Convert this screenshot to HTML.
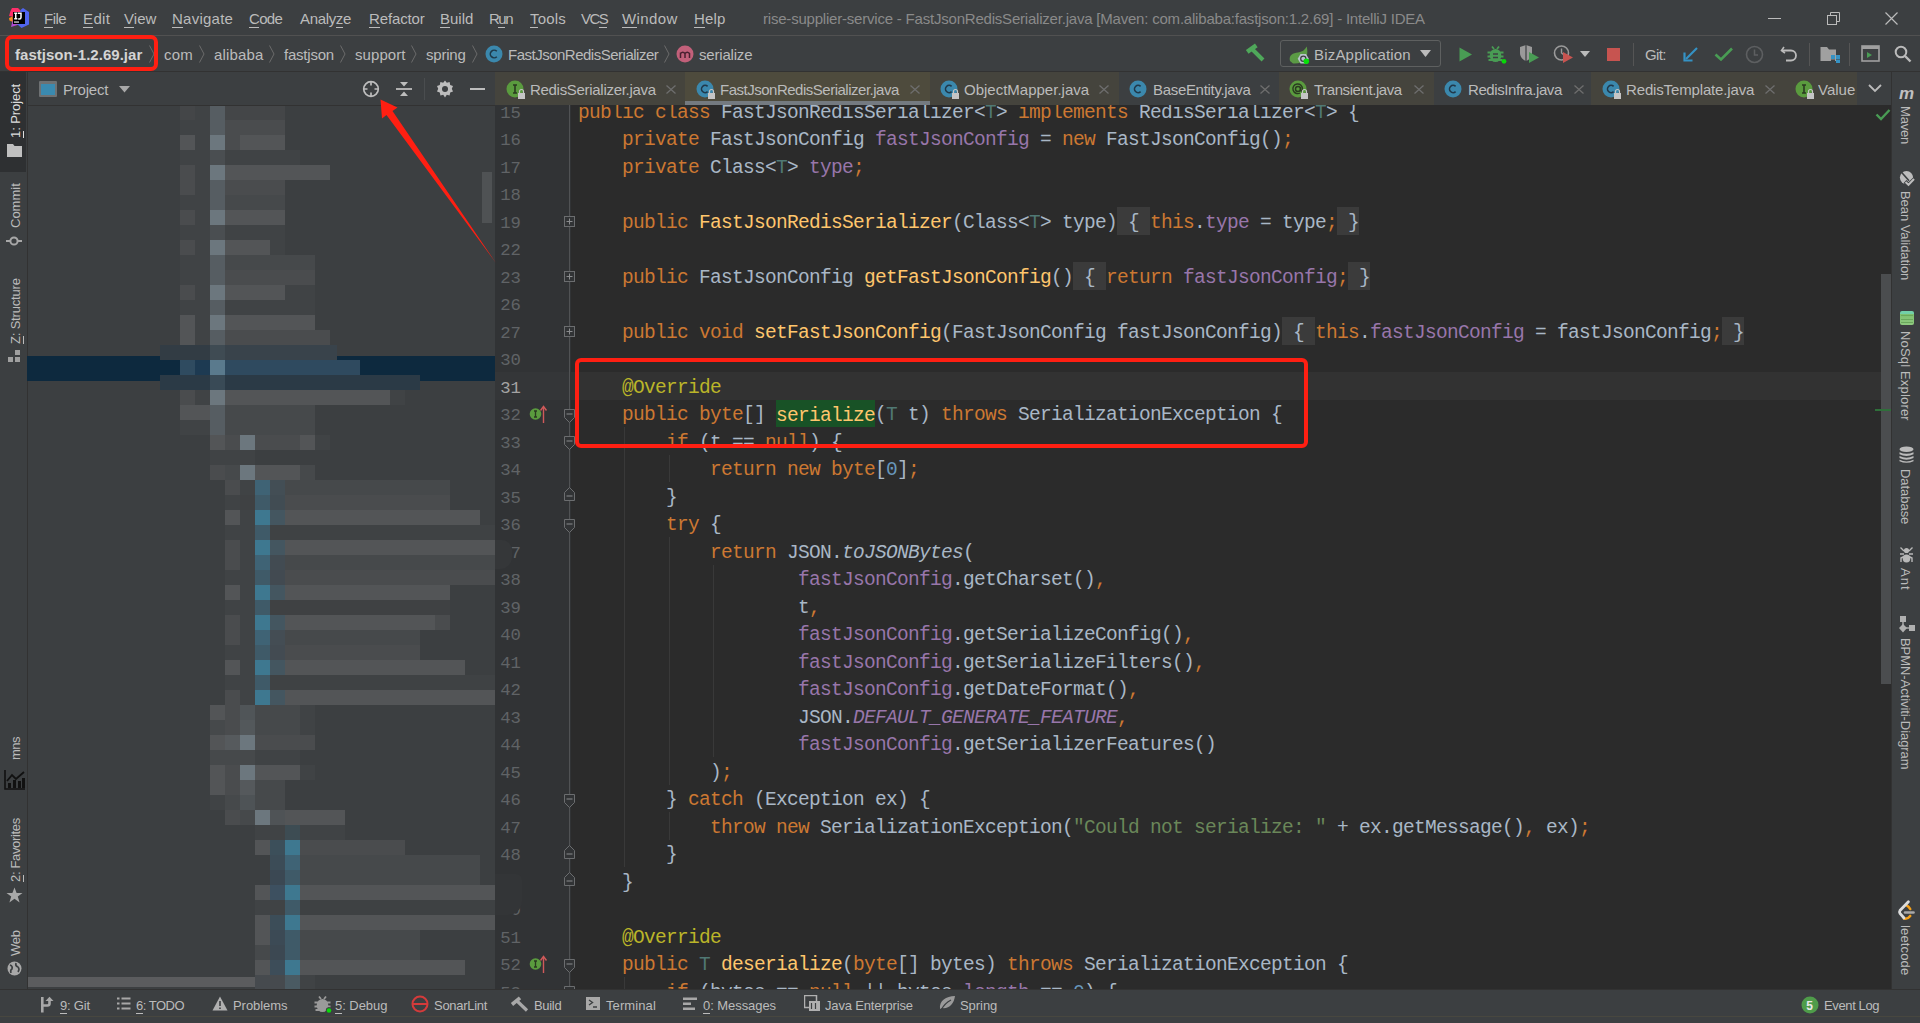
<!DOCTYPE html>
<html><head><meta charset="utf-8">
<style>
*{margin:0;padding:0;box-sizing:border-box}
html,body{width:1920px;height:1023px;overflow:hidden;background:#3c3f41}
body{position:relative;font-family:"Liberation Sans",sans-serif;font-size:15px;color:#bbbbbb}
.a{position:absolute}
.t{position:absolute;white-space:nowrap;line-height:20px}
u{text-decoration:none;border-bottom:1px solid currentColor}
/* menu */
#menu .t{top:9px;color:#bbbbbb}
/* code */
#ed{position:absolute;left:495px;top:105px;width:1397px;height:884px;background:#2b2b2b;overflow:hidden}
#code{position:absolute;left:0;top:-105px}
.cl{position:absolute;left:83px;height:27.5px;line-height:27.5px;white-space:pre;font-family:"Liberation Mono",monospace;font-size:19.5px;letter-spacing:-0.702px;color:#a9b7c6}
.ln{position:absolute;left:0;width:26px;text-align:right;height:27.5px;line-height:27.5px;font-family:"Liberation Mono",monospace;font-size:17.3px;color:#606366}
.ln.cur{color:#a4a3a3}
.k{color:#cc7832}.f{color:#9876aa}.m{color:#ffc66d}.tp{color:#507874}.n{color:#6897bb}.s{color:#6a8759}.an{color:#bbb529}.d{color:#a9b7c6}
.i{font-style:italic}
.fi{color:#9876aa;font-style:italic}
.fold{background:#3b3b3b;color:#a9b7c6;display:inline-block;box-sizing:border-box;height:27.5px;padding-top:2.6px;position:relative;top:-2.6px;vertical-align:top;line-height:27.5px}
.hl{background:#185226;color:#ffc66d;display:inline-block;box-sizing:border-box;height:27px;padding-top:2.6px;position:relative;top:-2.3px;vertical-align:top;line-height:27.5px}
#mos i{position:absolute;height:15px;display:block}
.vt{position:absolute;white-space:nowrap;font-size:13px;line-height:16px;color:#bbbbbb;transform-origin:0 0}
.vtl{transform:rotate(-90deg)}
.vtr{transform:rotate(90deg)}
</style></head><body>

<!-- ============ TITLE / MENU BAR ============ -->
<div id="menu">
  <svg class="a" style="left:0;top:0" width="40" height="35" viewBox="0 0 40 35">
    <polygon points="12,8 18,8 21,11 14,17 9,16 10.5,11" fill="#fe2e6a"/>
    <polygon points="9,18 12.5,16.5 13,22 9.5,20.5" fill="#fb8c1e"/>
    <polygon points="13,19 19,24.5 11,27" fill="#b24ad0"/>
    <polygon points="23,8 29,12 29,24.5 21.5,28 17,24 20.5,10" fill="#5065f0"/>
    <rect x="13" y="12" width="12" height="12" fill="#000"/>
    <path d="M14.2 13.3H17.3M15.75 13.3V18.8M14.2 18.8H17.3M18 13.3H21V17.5Q21 19 19.3 19H18.2" fill="none" stroke="#fff" stroke-width="1.5"/>
    <rect x="14" y="21.3" width="5" height="1.5" fill="#bbb"/>
  </svg>
  <div class="t" style="left:44px;letter-spacing:-0.500px"><u>F</u>ile</div>
  <div class="t" style="left:83px;letter-spacing:0.367px"><u>E</u>dit</div>
  <div class="t" style="left:124px;letter-spacing:0.067px"><u>V</u>iew</div>
  <div class="t" style="left:172px;letter-spacing:0.243px"><u>N</u>avigate</div>
  <div class="t" style="left:249px;letter-spacing:-0.667px"><u>C</u>ode</div>
  <div class="t" style="left:300px;letter-spacing:-0.333px">Analy<u>z</u>e</div>
  <div class="t" style="left:369px;letter-spacing:-0.143px"><u>R</u>efactor</div>
  <div class="t" style="left:440px;letter-spacing:0.000px"><u>B</u>uild</div>
  <div class="t" style="left:489px;letter-spacing:-1.500px">R<u>u</u>n</div>
  <div class="t" style="left:530px;letter-spacing:0.188px"><u>T</u>ools</div>
  <div class="t" style="left:581px;letter-spacing:-1.500px">VC<u>S</u></div>
  <div class="t" style="left:622px;letter-spacing:0.400px"><u>W</u>indow</div>
  <div class="t" style="left:694px;letter-spacing:0.167px"><u>H</u>elp</div>
  <div class="t" style="left:763px;color:#8a8a8a;letter-spacing:-0.207px">rise-supplier-service - FastJsonRedisSerializer.java [Maven: com.alibaba:fastjson:1.2.69] - IntelliJ IDEA</div>
  <div class="a" style="left:1768px;top:18px;width:13px;height:1px;background:#bbbbbb"></div>
  <svg class="a" style="left:1826px;top:11px" width="15" height="15" viewBox="0 0 15 15"><rect x="1.5" y="4.5" width="9" height="9" fill="none" stroke="#bbb"/><path d="M4.5 4.5V1.5H13.5V10.5H10.5" fill="none" stroke="#bbb"/></svg>
  <svg class="a" style="left:1884px;top:11px" width="15" height="15" viewBox="0 0 15 15"><path d="M1.5 1.5L13.5 13.5M13.5 1.5L1.5 13.5" stroke="#bbb" stroke-width="1.2"/></svg>
</div>
<div class="a" style="left:0;top:35px;width:1920px;height:1px;background:#515151"></div>

<!-- ============ NAV BAR ============ -->
<div id="nav">
  <div class="t" style="left:15px;top:45px;font-weight:bold;color:#d4d4d4;letter-spacing:0.028px">fastjson-1.2.69.jar</div>
  <svg class="a" style="left:148px;top:44px" width="8" height="20"><path d="M1.5 1.5L6 10L1.5 18.5" fill="none" stroke="#6b6b6b"/></svg>
  <div class="t" style="left:164px;top:45px;letter-spacing:0.250px">com</div>
  <svg class="a" style="left:198px;top:44px" width="8" height="20"><path d="M1.5 1.5L6 10L1.5 18.5" fill="none" stroke="#6b6b6b"/></svg>
  <div class="t" style="left:214px;top:45px;letter-spacing:0.167px">alibaba</div>
  <svg class="a" style="left:268px;top:44px" width="8" height="20"><path d="M1.5 1.5L6 10L1.5 18.5" fill="none" stroke="#6b6b6b"/></svg>
  <div class="t" style="left:284px;top:45px;letter-spacing:-0.214px">fastjson</div>
  <svg class="a" style="left:339px;top:44px" width="8" height="20"><path d="M1.5 1.5L6 10L1.5 18.5" fill="none" stroke="#6b6b6b"/></svg>
  <div class="t" style="left:355px;top:45px;letter-spacing:0.083px">support</div>
  <svg class="a" style="left:410px;top:44px" width="8" height="20"><path d="M1.5 1.5L6 10L1.5 18.5" fill="none" stroke="#6b6b6b"/></svg>
  <div class="t" style="left:426px;top:45px;letter-spacing:-0.200px">spring</div>
  <svg class="a" style="left:471px;top:44px" width="8" height="20"><path d="M1.5 1.5L6 10L1.5 18.5" fill="none" stroke="#6b6b6b"/></svg>
  <svg class="a" style="left:485px;top:45px" width="18" height="18" viewBox="0 0 18 18"><circle cx="9" cy="9" r="8.5" fill="#3b88ad"/><path d="M11.8 6.3A3.8 3.8 0 1 0 11.8 11.7" fill="none" stroke="#1e3a4a" stroke-width="1.6"/></svg>
  <div class="t" style="left:508px;top:45px;letter-spacing:-0.500px">FastJsonRedisSerializer</div>
  <svg class="a" style="left:663px;top:44px" width="8" height="20"><path d="M1.5 1.5L6 10L1.5 18.5" fill="none" stroke="#6b6b6b"/></svg>
  <svg class="a" style="left:676px;top:45px" width="18" height="18" viewBox="0 0 18 18"><circle cx="9" cy="9" r="8.5" fill="#c2607a"/><path d="M4.5 13V7.5M4.5 8.5Q6.8 5.8 9 8.5V13M9 8.5Q11.2 5.8 13.5 8.5V13" fill="none" stroke="#4a2030" stroke-width="1.5"/></svg>
  <div class="t" style="left:699px;top:45px;letter-spacing:-0.188px">serialize</div>

  <svg class="a" style="left:1240px;top:38px" width="30" height="30"><path d="M7.2 13.8L16.3 7.3" stroke="#4fa85a" stroke-width="4.5"/><path d="M11.5 10.5L23 22" stroke="#4fa85a" stroke-width="4"/></svg>
  <div class="a" style="left:1280px;top:40px;width:161px;height:27px;border:1px solid #5e6060;border-radius:3px;background:#3c3f41"></div>
  <svg class="a" style="left:1285px;top:42px" width="30" height="26" viewBox="0 0 30 26"><path d="M5 19C3.5 13 8 11 13 10.5C17 10 20 8 21.7 4.5C22.5 8 22.5 11 22 13L17 20Q12 22 8 21.5Z" fill="#5b9a45"/><polygon points="12.7,16.8 15.5,12 21,12 23.8,16.8 21,21.6 15.5,21.6" fill="#b9c4cc"/><circle cx="18.3" cy="16.8" r="2.6" fill="none" stroke="#3a3d3f" stroke-width="1.2"/><circle cx="21.3" cy="19.3" r="2.8" fill="#08e008"/></svg>
  <div class="t" style="left:1314px;top:45px;letter-spacing:0.192px">BizApplication</div>
  <svg class="a" style="left:1420px;top:50px" width="12" height="8"><path d="M0 0H11L5.5 7Z" fill="#bbbbbb"/></svg>
  <svg class="a" style="left:1459px;top:47px" width="14" height="15"><path d="M0.5 0.5L13 7.5L0.5 14.5Z" fill="#499c54"/></svg>
  <svg class="a" style="left:1486px;top:44px" width="22" height="20" viewBox="0 0 22 20"><path d="M6 2.5L8 5M13 2.5L11 5" stroke="#499c54" stroke-width="1.8"/><ellipse cx="9.5" cy="11.5" rx="5.8" ry="6.6" fill="#499c54"/><path d="M1.5 8.5H17.5M1.5 12.5H17.5M2.5 16H16.5" stroke="#499c54" stroke-width="2"/><path d="M7 10H12M7 13.5H12" stroke="#3c3f41" stroke-width="1.5"/><circle cx="18" cy="17.3" r="2.4" fill="#08d808"/></svg>
  <svg class="a" style="left:1519px;top:44px" width="22" height="20" viewBox="0 0 22 20"><path d="M1 3L7 1L13 3V9C13 13 10 16 7 17C4 16 1 13 1 9Z" fill="#9a9a9a"/><path d="M7 1V17" stroke="#3c3f41" stroke-width="1.2"/><path d="M10 8L20 13.5L10 19Z" fill="#499c54"/></svg>
  <svg class="a" style="left:1553px;top:44px" width="22" height="20" viewBox="0 0 22 20"><circle cx="8.5" cy="9" r="7" fill="none" stroke="#9a9a9a" stroke-width="1.6"/><path d="M8.5 4.5V9L11 11" fill="none" stroke="#9a9a9a" stroke-width="1.4"/><path d="M10 8L20 13.5L10 19Z" fill="#c75450"/></svg>
  <svg class="a" style="left:1580px;top:51px" width="11" height="7"><path d="M0 0H10L5 6Z" fill="#bbbbbb"/></svg>
  <div class="a" style="left:1607px;top:47.5px;width:12.5px;height:13px;background:#c75450"></div>
  <div class="a" style="left:1633px;top:43px;width:1px;height:23px;background:#555555"></div>
  <div class="t" style="left:1645px;top:45px;letter-spacing:-0.667px">Git:</div>
  <svg class="a" style="left:1683px;top:46px" width="16" height="16" viewBox="0 0 16 16"><path d="M14 2L3 13" stroke="#3592c4" stroke-width="2.2"/><path d="M1.5 6.5V14.5H9.5" fill="none" stroke="#3592c4" stroke-width="2.2"/></svg>
  <svg class="a" style="left:1714px;top:46px" width="20" height="16" viewBox="0 0 20 16"><path d="M1.5 8.5L7 13.5L18 2.5" fill="none" stroke="#499c54" stroke-width="2.6"/></svg>
  <svg class="a" style="left:1745px;top:45px" width="20" height="19" viewBox="0 0 20 19"><circle cx="9.5" cy="9.5" r="8" fill="none" stroke="#5d5f61" stroke-width="1.6"/><path d="M9.5 4.5V10H13" fill="none" stroke="#5d5f61" stroke-width="1.5"/></svg>
  <svg class="a" style="left:1780px;top:45px" width="18" height="18" viewBox="0 0 18 18"><path d="M4 2L1.5 5.5L5 8" fill="none" stroke="#bbbbbb" stroke-width="1.6"/><path d="M2 5.5H11A5 5 0 0 1 11 15.5H6" fill="none" stroke="#bbbbbb" stroke-width="1.8"/></svg>
  <div class="a" style="left:1809px;top:43px;width:1px;height:23px;background:#555555"></div>
  <svg class="a" style="left:1820px;top:46px" width="20" height="17" viewBox="0 0 20 17"><path d="M0.5 1H7L9 3.5H16V15H0.5Z" fill="#a0a0a0"/><rect x="11" y="9" width="4" height="4" fill="#3592c4"/><rect x="16" y="9" width="4" height="4" fill="#3592c4"/><rect x="16" y="13.5" width="4" height="3.5" fill="#3592c4"/><rect x="11" y="13.5" width="4" height="3.5" fill="#3c3f41"/></svg>
  <div class="a" style="left:1849px;top:43px;width:1px;height:23px;background:#555555"></div>
  <svg class="a" style="left:1861px;top:45px" width="19" height="17" viewBox="0 0 19 17"><rect x="1" y="1" width="17" height="15" fill="none" stroke="#a0a0a0" stroke-width="1.6"/><rect x="1" y="1" width="17" height="3" fill="#a0a0a0"/><path d="M6 7L11 10L6 13Z" fill="#499c54"/></svg>
  <svg class="a" style="left:1894px;top:45px" width="18" height="18" viewBox="0 0 18 18"><circle cx="7" cy="7" r="5.3" fill="none" stroke="#bbbbbb" stroke-width="2"/><path d="M11 11L16.5 16.5" stroke="#bbbbbb" stroke-width="2.4"/></svg>
</div>
<div class="a" style="left:0;top:71px;width:1920px;height:1px;background:#323232"></div>

<!-- ============ LEFT STRIPE ============ -->
<div class="a" style="left:0;top:72px;width:27px;height:917px;background:#3c3f41"></div>
<div class="a" style="left:0;top:72px;width:26px;height:100px;background:#2e3032"></div>
<div class="a" style="left:27px;top:72px;width:1px;height:917px;background:#323232"></div>
<div class="vt vtl" style="left:8px;top:137.8px;color:#dddddd;letter-spacing:-0.078px"><u>1</u>: Project</div>
<svg class="a" style="left:7px;top:144px" width="15" height="13"><path d="M0 0H6L7.5 2H15V13H0Z" fill="#c0c0c0"/></svg>
<div class="vt vtl" style="left:8px;top:228px;letter-spacing:0.000px">Commit</div>
<svg class="a" style="left:6px;top:235px" width="16" height="12"><circle cx="8" cy="6" r="3.6" fill="none" stroke="#a8a8a8" stroke-width="2"/><path d="M0 6H4M12 6H16" stroke="#a8a8a8" stroke-width="2"/></svg>
<div class="vt vtl" style="left:8px;top:344px;letter-spacing:-0.182px"><u>Z</u>: Structure</div>
<svg class="a" style="left:7px;top:350px" width="14" height="14"><rect x="8" y="0" width="5" height="5" fill="#a0a0a0"/><rect x="1" y="7" width="5" height="5" fill="#a0a0a0"/><rect x="8" y="7" width="5" height="5" fill="#a0a0a0"/></svg>
<div class="vt vtl" style="left:8px;top:760px;letter-spacing:-0.500px">mns</div>
<svg class="a" style="left:4px;top:769px" width="22" height="21"><path d="M1 1V20H21" fill="none" stroke="#111" stroke-width="1.6"/><path d="M3 12L8 6L12 10L20 3" fill="none" stroke="#111" stroke-width="1.8"/><rect x="4" y="14" width="3" height="5" fill="#111"/><rect x="9" y="11" width="3" height="8" fill="#111"/><rect x="14" y="12" width="3" height="7" fill="#111"/><rect x="18" y="9" width="3" height="10" fill="#111"/></svg>
<div class="vt vtl" style="left:8px;top:882px;letter-spacing:-0.336px"><u>2</u>: Favorites</div>
<svg class="a" style="left:6px;top:887px" width="17" height="17" viewBox="0 0 17 17"><path d="M8.5 0.5L10.6 6H16.5L11.8 9.5L13.6 15.5L8.5 11.8L3.4 15.5L5.2 9.5L0.5 6H6.4Z" fill="#a8a8a8"/></svg>
<div class="vt vtl" style="left:8px;top:955.5px;letter-spacing:-0.250px">Web</div>
<svg class="a" style="left:7px;top:961px" width="15" height="15" viewBox="0 0 15 15"><circle cx="7.5" cy="7.5" r="7" fill="#a8a8a8"/><path d="M3 4Q6 5 5 8Q3 9 4 12M9 2Q8 5 11 6Q13 8 11 11" fill="none" stroke="#3c3f41" stroke-width="1.6"/></svg>

<!-- ============ PROJECT PANEL ============ -->
<div class="a" style="left:28px;top:72px;width:467px;height:917px;background:#3c3f41"></div>
<div class="a" style="left:39px;top:81px;width:18px;height:16px;background:#6e7173;border-radius:1px"></div>
<div class="a" style="left:41px;top:84px;width:14px;height:11px;background:#3a8ab0"></div>
<div class="t" style="left:63px;top:80px;color:#bbbbbb;letter-spacing:-0.200px">Project</div>
<svg class="a" style="left:119px;top:86px" width="12" height="8"><path d="M0 0H11L5.5 6.5Z" fill="#a8a8a8"/></svg>
<svg class="a" style="left:362px;top:80px" width="18" height="18" viewBox="0 0 18 18"><circle cx="9" cy="9" r="7.3" fill="none" stroke="#bdbdbd" stroke-width="1.7"/><path d="M9 1V5.5M9 12.5V17M1 9H5.5M12.5 9H17" stroke="#bdbdbd" stroke-width="1.7"/></svg>
<svg class="a" style="left:395px;top:80px" width="18" height="18" viewBox="0 0 18 18"><path d="M1 9H17" stroke="#bdbdbd" stroke-width="1.8"/><path d="M5 2H13L9 6.5Z M5 16H13L9 11.5Z" fill="#bdbdbd"/></svg>
<div class="a" style="left:424px;top:78px;width:1px;height:22px;background:#4a4d4f"></div>
<svg class="a" style="left:436px;top:80px" width="18" height="18" viewBox="0 0 18 18"><path d="M9 0.5L10.8 2.8L13.6 2.1L14.2 5L17 6L15.8 8.8L17 11.6L14.2 12.6L13.6 15.5L10.8 14.8L9 17.5L7.2 14.8L4.4 15.5L3.8 12.6L1 11.6L2.2 8.8L1 6L3.8 5L4.4 2.1L7.2 2.8Z" fill="#bdbdbd"/><circle cx="9" cy="9" r="3" fill="#3c3f41"/></svg>
<div class="a" style="left:470px;top:88px;width:15px;height:2px;background:#bdbdbd"></div>
<div class="a" style="left:482px;top:172px;width:10px;height:51px;background:#4f5254"></div>
<div class="a" style="left:28px;top:977px;width:228px;height:10px;background:#5b5c5e"></div>

<div class="a" style="left:27px;top:356px;width:468px;height:25px;background:#0d293e"></div>
<div id="mos"><i style="left:180px;top:105px;width:15px;background:#444648"></i>
<i style="left:195px;top:105px;width:15px;background:#404345"></i>
<i style="left:210px;top:105px;width:15px;background:#565d62"></i>
<i style="left:225px;top:105px;width:60px;background:#444648"></i>
<i style="left:180px;top:120px;width:30px;background:#404345"></i>
<i style="left:210px;top:120px;width:15px;background:#565d62"></i>
<i style="left:225px;top:120px;width:60px;background:#4a4c4e"></i>
<i style="left:180px;top:135px;width:15px;background:#535557"></i>
<i style="left:195px;top:135px;width:15px;background:#404345"></i>
<i style="left:210px;top:135px;width:15px;background:#6c777e"></i>
<i style="left:225px;top:135px;width:15px;background:#4a4c4e"></i>
<i style="left:240px;top:135px;width:45px;background:#535557"></i>
<i style="left:180px;top:150px;width:30px;background:#404345"></i>
<i style="left:210px;top:150px;width:15px;background:#4a4e51"></i>
<i style="left:225px;top:150px;width:75px;background:#404345"></i>
<i style="left:180px;top:165px;width:15px;background:#4a4c4e"></i>
<i style="left:195px;top:165px;width:15px;background:#404345"></i>
<i style="left:210px;top:165px;width:15px;background:#6c777e"></i>
<i style="left:225px;top:165px;width:105px;background:#535557"></i>
<i style="left:180px;top:180px;width:15px;background:#4a4c4e"></i>
<i style="left:195px;top:180px;width:15px;background:#404345"></i>
<i style="left:210px;top:180px;width:15px;background:#565d62"></i>
<i style="left:225px;top:180px;width:60px;background:#4a4c4e"></i>
<i style="left:180px;top:195px;width:30px;background:#404345"></i>
<i style="left:210px;top:195px;width:15px;background:#565d62"></i>
<i style="left:225px;top:195px;width:60px;background:#46494b"></i>
<i style="left:180px;top:210px;width:15px;background:#4a4c4e"></i>
<i style="left:195px;top:210px;width:15px;background:#404345"></i>
<i style="left:210px;top:210px;width:15px;background:#6c777e"></i>
<i style="left:225px;top:210px;width:60px;background:#535557"></i>
<i style="left:180px;top:225px;width:30px;background:#404345"></i>
<i style="left:210px;top:225px;width:15px;background:#4a4e51"></i>
<i style="left:225px;top:225px;width:60px;background:#404345"></i>
<i style="left:180px;top:240px;width:15px;background:#4a4c4e"></i>
<i style="left:195px;top:240px;width:15px;background:#404345"></i>
<i style="left:210px;top:240px;width:15px;background:#6c777e"></i>
<i style="left:225px;top:240px;width:45px;background:#535557"></i>
<i style="left:270px;top:240px;width:15px;background:#404345"></i>
<i style="left:180px;top:255px;width:30px;background:#404345"></i>
<i style="left:210px;top:255px;width:15px;background:#565d62"></i>
<i style="left:225px;top:255px;width:90px;background:#46494b"></i>
<i style="left:180px;top:270px;width:30px;background:#404345"></i>
<i style="left:210px;top:270px;width:15px;background:#565d62"></i>
<i style="left:225px;top:270px;width:90px;background:#4a4c4e"></i>
<i style="left:180px;top:285px;width:15px;background:#4a4c4e"></i>
<i style="left:195px;top:285px;width:15px;background:#404345"></i>
<i style="left:210px;top:285px;width:15px;background:#6c777e"></i>
<i style="left:225px;top:285px;width:60px;background:#535557"></i>
<i style="left:285px;top:285px;width:30px;background:#404345"></i>
<i style="left:180px;top:300px;width:30px;background:#404345"></i>
<i style="left:210px;top:300px;width:15px;background:#565d62"></i>
<i style="left:225px;top:300px;width:90px;background:#404345"></i>
<i style="left:180px;top:315px;width:15px;background:#535557"></i>
<i style="left:195px;top:315px;width:15px;background:#404345"></i>
<i style="left:210px;top:315px;width:15px;background:#6c777e"></i>
<i style="left:225px;top:315px;width:90px;background:#535557"></i>
<i style="left:180px;top:330px;width:15px;background:#535557"></i>
<i style="left:195px;top:330px;width:15px;background:#404345"></i>
<i style="left:210px;top:330px;width:15px;background:#565d62"></i>
<i style="left:225px;top:330px;width:105px;background:#4a4c4e"></i>
<i style="left:160px;top:345px;width:50px;background:#323c44"></i>
<i style="left:210px;top:345px;width:15px;background:#3f4b53"></i>
<i style="left:225px;top:345px;width:112px;background:#39434b"></i>
<i style="left:180px;top:360px;width:15px;background:#2f4b60"></i>
<i style="left:195px;top:360px;width:15px;background:#1d3a52"></i>
<i style="left:210px;top:360px;width:15px;background:#5a7a8d"></i>
<i style="left:225px;top:360px;width:135px;background:#2f4a5f"></i>
<i style="left:160px;top:375px;width:50px;background:#2b3a46"></i>
<i style="left:210px;top:375px;width:15px;background:#394a56"></i>
<i style="left:225px;top:375px;width:195px;background:#2b3a46"></i>
<i style="left:180px;top:390px;width:15px;background:#4a4c4e"></i>
<i style="left:195px;top:390px;width:15px;background:#404345"></i>
<i style="left:210px;top:390px;width:15px;background:#6c777e"></i>
<i style="left:225px;top:390px;width:165px;background:#535557"></i>
<i style="left:390px;top:390px;width:15px;background:#404345"></i>
<i style="left:180px;top:405px;width:30px;background:#535557"></i>
<i style="left:210px;top:405px;width:15px;background:#565d62"></i>
<i style="left:225px;top:405px;width:90px;background:#46494b"></i>
<i style="left:180px;top:420px;width:30px;background:#404345"></i>
<i style="left:210px;top:420px;width:15px;background:#565d62"></i>
<i style="left:225px;top:420px;width:90px;background:#46494b"></i>
<i style="left:210px;top:435px;width:15px;background:#535557"></i>
<i style="left:225px;top:435px;width:15px;background:#4a4c4e"></i>
<i style="left:240px;top:435px;width:15px;background:#6c777e"></i>
<i style="left:255px;top:435px;width:45px;background:#4a4c4e"></i>
<i style="left:300px;top:435px;width:15px;background:#535557"></i>
<i style="left:315px;top:435px;width:15px;background:#404345"></i>
<i style="left:210px;top:450px;width:45px;background:#404345"></i>
<i style="left:210px;top:465px;width:15px;background:#4a4c4e"></i>
<i style="left:225px;top:465px;width:15px;background:#46494b"></i>
<i style="left:240px;top:465px;width:15px;background:#6c777e"></i>
<i style="left:255px;top:465px;width:45px;background:#535557"></i>
<i style="left:300px;top:465px;width:15px;background:#46494b"></i>
<i style="left:225px;top:480px;width:15px;background:#4a4c4e"></i>
<i style="left:240px;top:480px;width:15px;background:#404345"></i>
<i style="left:255px;top:480px;width:15px;background:#3f6375"></i>
<i style="left:270px;top:480px;width:15px;background:#434e55"></i>
<i style="left:285px;top:480px;width:165px;background:#46494b"></i>
<i style="left:225px;top:495px;width:15px;background:#404345"></i>
<i style="left:240px;top:495px;width:15px;background:#3f4143"></i>
<i style="left:255px;top:495px;width:15px;background:#3f5a68"></i>
<i style="left:270px;top:495px;width:15px;background:#414c53"></i>
<i style="left:285px;top:495px;width:165px;background:#4a4c4e"></i>
<i style="left:225px;top:510px;width:15px;background:#535557"></i>
<i style="left:240px;top:510px;width:15px;background:#404345"></i>
<i style="left:255px;top:510px;width:15px;background:#3e7890"></i>
<i style="left:270px;top:510px;width:15px;background:#445660"></i>
<i style="left:285px;top:510px;width:195px;background:#535557"></i>
<i style="left:225px;top:525px;width:30px;background:#404345"></i>
<i style="left:255px;top:525px;width:15px;background:#3f5a68"></i>
<i style="left:270px;top:525px;width:225px;background:#3f4244"></i>
<i style="left:225px;top:540px;width:15px;background:#4a4c4e"></i>
<i style="left:240px;top:540px;width:15px;background:#404345"></i>
<i style="left:255px;top:540px;width:15px;background:#3e7890"></i>
<i style="left:270px;top:540px;width:15px;background:#445660"></i>
<i style="left:285px;top:540px;width:210px;background:#535557"></i>
<i style="left:225px;top:555px;width:15px;background:#4a4c4e"></i>
<i style="left:240px;top:555px;width:15px;background:#404345"></i>
<i style="left:255px;top:555px;width:15px;background:#3f6375"></i>
<i style="left:270px;top:555px;width:15px;background:#424b52"></i>
<i style="left:285px;top:555px;width:210px;background:#46494b"></i>
<i style="left:225px;top:570px;width:15px;background:#404345"></i>
<i style="left:240px;top:570px;width:15px;background:#404345"></i>
<i style="left:255px;top:570px;width:15px;background:#3f5a68"></i>
<i style="left:270px;top:570px;width:15px;background:#424a51"></i>
<i style="left:285px;top:570px;width:210px;background:#4a4c4e"></i>
<i style="left:225px;top:585px;width:15px;background:#535557"></i>
<i style="left:240px;top:585px;width:15px;background:#404345"></i>
<i style="left:255px;top:585px;width:15px;background:#3e7890"></i>
<i style="left:270px;top:585px;width:15px;background:#445660"></i>
<i style="left:285px;top:585px;width:165px;background:#535557"></i>
<i style="left:225px;top:600px;width:30px;background:#404345"></i>
<i style="left:255px;top:600px;width:15px;background:#3f5a68"></i>
<i style="left:270px;top:600px;width:180px;background:#3f4143"></i>
<i style="left:225px;top:615px;width:15px;background:#4a4c4e"></i>
<i style="left:240px;top:615px;width:15px;background:#404345"></i>
<i style="left:255px;top:615px;width:15px;background:#3e7890"></i>
<i style="left:270px;top:615px;width:15px;background:#445660"></i>
<i style="left:285px;top:615px;width:150px;background:#535557"></i>
<i style="left:435px;top:615px;width:15px;background:#4a4c4e"></i>
<i style="left:225px;top:630px;width:15px;background:#4a4c4e"></i>
<i style="left:240px;top:630px;width:15px;background:#404345"></i>
<i style="left:255px;top:630px;width:15px;background:#3f6375"></i>
<i style="left:270px;top:630px;width:15px;background:#444d54"></i>
<i style="left:285px;top:630px;width:135px;background:#46494b"></i>
<i style="left:225px;top:645px;width:15px;background:#404345"></i>
<i style="left:240px;top:645px;width:15px;background:#404345"></i>
<i style="left:255px;top:645px;width:15px;background:#3f5a68"></i>
<i style="left:270px;top:645px;width:15px;background:#434b52"></i>
<i style="left:285px;top:645px;width:135px;background:#4a4c4e"></i>
<i style="left:225px;top:660px;width:15px;background:#535557"></i>
<i style="left:240px;top:660px;width:15px;background:#404345"></i>
<i style="left:255px;top:660px;width:15px;background:#3e7890"></i>
<i style="left:270px;top:660px;width:15px;background:#445660"></i>
<i style="left:285px;top:660px;width:180px;background:#535557"></i>
<i style="left:225px;top:675px;width:30px;background:#404345"></i>
<i style="left:255px;top:675px;width:15px;background:#3f5a68"></i>
<i style="left:270px;top:675px;width:225px;background:#3f4244"></i>
<i style="left:225px;top:690px;width:15px;background:#4a4c4e"></i>
<i style="left:240px;top:690px;width:15px;background:#404345"></i>
<i style="left:255px;top:690px;width:15px;background:#3e7890"></i>
<i style="left:270px;top:690px;width:15px;background:#445660"></i>
<i style="left:285px;top:690px;width:210px;background:#535557"></i>
<i style="left:210px;top:705px;width:15px;background:#535557"></i>
<i style="left:225px;top:705px;width:15px;background:#4a4c4e"></i>
<i style="left:240px;top:705px;width:15px;background:#505558"></i>
<i style="left:255px;top:705px;width:45px;background:#46494b"></i>
<i style="left:300px;top:705px;width:15px;background:#404345"></i>
<i style="left:210px;top:720px;width:15px;background:#46494b"></i>
<i style="left:225px;top:720px;width:15px;background:#4a4c4e"></i>
<i style="left:240px;top:720px;width:15px;background:#53585b"></i>
<i style="left:255px;top:720px;width:45px;background:#46494b"></i>
<i style="left:300px;top:720px;width:15px;background:#404345"></i>
<i style="left:210px;top:735px;width:15px;background:#535557"></i>
<i style="left:225px;top:735px;width:15px;background:#565a5d"></i>
<i style="left:240px;top:735px;width:15px;background:#6c777e"></i>
<i style="left:255px;top:735px;width:60px;background:#4a4c4e"></i>
<i style="left:210px;top:750px;width:45px;background:#46494b"></i>
<i style="left:255px;top:750px;width:45px;background:#404345"></i>
<i style="left:210px;top:765px;width:15px;background:#535557"></i>
<i style="left:225px;top:765px;width:15px;background:#4a4c4e"></i>
<i style="left:240px;top:765px;width:15px;background:#6c777e"></i>
<i style="left:255px;top:765px;width:45px;background:#535557"></i>
<i style="left:300px;top:765px;width:15px;background:#404345"></i>
<i style="left:210px;top:780px;width:15px;background:#535557"></i>
<i style="left:225px;top:780px;width:15px;background:#4a4c4e"></i>
<i style="left:240px;top:780px;width:15px;background:#55595c"></i>
<i style="left:255px;top:780px;width:30px;background:#46494b"></i>
<i style="left:210px;top:795px;width:15px;background:#404345"></i>
<i style="left:225px;top:795px;width:15px;background:#46494b"></i>
<i style="left:240px;top:795px;width:15px;background:#4e5356"></i>
<i style="left:255px;top:795px;width:30px;background:#46494b"></i>
<i style="left:225px;top:810px;width:15px;background:#4a4c4e"></i>
<i style="left:240px;top:810px;width:15px;background:#46494b"></i>
<i style="left:255px;top:810px;width:15px;background:#6c777e"></i>
<i style="left:270px;top:810px;width:15px;background:#4f5356"></i>
<i style="left:285px;top:810px;width:60px;background:#535557"></i>
<i style="left:255px;top:825px;width:30px;background:#404345"></i>
<i style="left:285px;top:825px;width:15px;background:#3d4c53"></i>
<i style="left:300px;top:825px;width:45px;background:#404345"></i>
<i style="left:255px;top:840px;width:15px;background:#535557"></i>
<i style="left:270px;top:840px;width:15px;background:#3c4f5a"></i>
<i style="left:285px;top:840px;width:15px;background:#3e7890"></i>
<i style="left:300px;top:840px;width:105px;background:#4a4c4e"></i>
<i style="left:270px;top:855px;width:15px;background:#3c4c57"></i>
<i style="left:285px;top:855px;width:15px;background:#3f6375"></i>
<i style="left:300px;top:855px;width:180px;background:#46494b"></i>
<i style="left:270px;top:870px;width:15px;background:#3b4853"></i>
<i style="left:285px;top:870px;width:15px;background:#3f5a68"></i>
<i style="left:300px;top:870px;width:180px;background:#46494b"></i>
<i style="left:255px;top:885px;width:15px;background:#535557"></i>
<i style="left:270px;top:885px;width:15px;background:#3d5060"></i>
<i style="left:285px;top:885px;width:15px;background:#3e7890"></i>
<i style="left:300px;top:885px;width:195px;background:#535557"></i>
<i style="left:255px;top:900px;width:30px;background:#404345"></i>
<i style="left:285px;top:900px;width:15px;background:#3f5a68"></i>
<i style="left:300px;top:900px;width:195px;background:#3e4143"></i>
<i style="left:255px;top:915px;width:15px;background:#535557"></i>
<i style="left:270px;top:915px;width:15px;background:#3c4d58"></i>
<i style="left:285px;top:915px;width:15px;background:#3e7890"></i>
<i style="left:300px;top:915px;width:195px;background:#535557"></i>
<i style="left:255px;top:930px;width:15px;background:#535557"></i>
<i style="left:270px;top:930px;width:15px;background:#3c4a55"></i>
<i style="left:285px;top:930px;width:15px;background:#3f5a68"></i>
<i style="left:300px;top:930px;width:120px;background:#46494b"></i>
<i style="left:255px;top:945px;width:15px;background:#46494b"></i>
<i style="left:270px;top:945px;width:15px;background:#3c4852"></i>
<i style="left:285px;top:945px;width:15px;background:#3f5a68"></i>
<i style="left:300px;top:945px;width:120px;background:#46494b"></i>
<i style="left:255px;top:960px;width:15px;background:#535557"></i>
<i style="left:270px;top:960px;width:15px;background:#3d4d59"></i>
<i style="left:285px;top:960px;width:15px;background:#3e7890"></i>
<i style="left:300px;top:960px;width:165px;background:#535557"></i>
<i style="left:255px;top:975px;width:30px;background:#464a4e"></i>
<i style="left:285px;top:975px;width:15px;background:#4a5a62"></i>
<i style="left:300px;top:975px;width:15px;background:#404345"></i></div>
<div class="a" style="left:28px;top:105px;width:467px;height:1px;background:#323232"></div>
<div class="a" style="left:495px;top:540px;width:17px;height:29px;background:#353739;border-radius:0 10px 12px 0;z-index:2"></div>
<div class="a" style="left:495px;top:874px;width:27px;height:41px;background:#333537;border-radius:0 6px 14px 0;z-index:2"></div>

<!-- ============ EDITOR ============ -->
<div class="a" style="left:495px;top:72px;width:1397px;height:33px;background:#3c3f41"></div>
<div class="a" style="left:495px;top:72px;width:190px;height:33px;background:#45443d"></div>
<svg class="a" style="left:506px;top:80px" width="20" height="20" viewBox="0 0 20 20"><circle cx="9" cy="9" r="8.5" fill="#5a9b3e"/><path d="M7 5H11M9 5V13M7 13H11" stroke="#2a3a20" stroke-width="1.6"/><rect x="12" y="13" width="7" height="6" fill="#c5c5c5"/><path d="M13.5 13V11.5A2 2 0 0 1 17.5 11.5V13" fill="none" stroke="#c5c5c5" stroke-width="1.2"/></svg>
<div class="t" style="left:530px;top:80px;letter-spacing:-0.300px">RedisSerializer.java</div>
<svg class="a" style="left:666px;top:85px" width="10" height="9"><path d="M0.5 0.5L9.5 8.5M9.5 0.5L0.5 8.5" stroke="#6e6e6e" stroke-width="1.3"/></svg>
<div class="a" style="left:685px;top:72px;width:245px;height:33px;background:#4e4b3d"></div>
<svg class="a" style="left:696px;top:80px" width="20" height="20" viewBox="0 0 20 20"><circle cx="9" cy="9" r="8.5" fill="#3b88ad"/><path d="M11.6 6.4A3.6 3.6 0 1 0 11.6 11.6" fill="none" stroke="#20384a" stroke-width="1.6"/><rect x="12" y="13" width="7" height="6" fill="#c5c5c5"/><path d="M13.5 13V11.5A2 2 0 0 1 17.5 11.5V13" fill="none" stroke="#c5c5c5" stroke-width="1.2"/></svg>
<div class="t" style="left:720px;top:80px;letter-spacing:-0.493px">FastJsonRedisSerializer.java</div>
<svg class="a" style="left:910px;top:85px" width="10" height="9"><path d="M0.5 0.5L9.5 8.5M9.5 0.5L0.5 8.5" stroke="#6e6e6e" stroke-width="1.3"/></svg>
<div class="a" style="left:930px;top:72px;width:189px;height:33px;background:#45443d"></div>
<svg class="a" style="left:940px;top:80px" width="20" height="20" viewBox="0 0 20 20"><circle cx="9" cy="9" r="8.5" fill="#3b88ad"/><path d="M11.6 6.4A3.6 3.6 0 1 0 11.6 11.6" fill="none" stroke="#20384a" stroke-width="1.6"/><rect x="12" y="13" width="7" height="6" fill="#c5c5c5"/><path d="M13.5 13V11.5A2 2 0 0 1 17.5 11.5V13" fill="none" stroke="#c5c5c5" stroke-width="1.2"/></svg>
<div class="t" style="left:964px;top:80px;letter-spacing:0.000px">ObjectMapper.java</div>
<svg class="a" style="left:1099px;top:85px" width="10" height="9"><path d="M0.5 0.5L9.5 8.5M9.5 0.5L0.5 8.5" stroke="#6e6e6e" stroke-width="1.3"/></svg>
<svg class="a" style="left:1129px;top:80px" width="20" height="20" viewBox="0 0 20 20"><circle cx="9" cy="9" r="8.5" fill="#3b88ad"/><path d="M11.6 6.4A3.6 3.6 0 1 0 11.6 11.6" fill="none" stroke="#20384a" stroke-width="1.6"/></svg>
<div class="t" style="left:1153px;top:80px;letter-spacing:-0.314px">BaseEntity.java</div>
<svg class="a" style="left:1260px;top:85px" width="10" height="9"><path d="M0.5 0.5L9.5 8.5M9.5 0.5L0.5 8.5" stroke="#6e6e6e" stroke-width="1.3"/></svg>
<div class="a" style="left:1279px;top:72px;width:155px;height:33px;background:#45443d"></div>
<svg class="a" style="left:1289px;top:80px" width="20" height="20" viewBox="0 0 20 20"><circle cx="9" cy="9" r="8.5" fill="#5a9b3e"/><circle cx="9" cy="9" r="2.5" fill="none" stroke="#2a3a20" stroke-width="1.4"/><path d="M11.5 7V10.5Q13 12 13.5 9A4.8 4.8 0 1 0 11 13" fill="none" stroke="#2a3a20" stroke-width="1.4"/><rect x="12" y="13" width="7" height="6" fill="#c5c5c5"/><path d="M13.5 13V11.5A2 2 0 0 1 17.5 11.5V13" fill="none" stroke="#c5c5c5" stroke-width="1.2"/></svg>
<div class="t" style="left:1314px;top:80px;letter-spacing:-0.423px">Transient.java</div>
<svg class="a" style="left:1414px;top:85px" width="10" height="9"><path d="M0.5 0.5L9.5 8.5M9.5 0.5L0.5 8.5" stroke="#6e6e6e" stroke-width="1.3"/></svg>
<svg class="a" style="left:1444px;top:80px" width="20" height="20" viewBox="0 0 20 20"><circle cx="9" cy="9" r="8.5" fill="#3b88ad"/><path d="M11.6 6.4A3.6 3.6 0 1 0 11.6 11.6" fill="none" stroke="#20384a" stroke-width="1.6"/></svg>
<div class="t" style="left:1468px;top:80px;letter-spacing:-0.411px">RedisInfra.java</div>
<svg class="a" style="left:1574px;top:85px" width="10" height="9"><path d="M0.5 0.5L9.5 8.5M9.5 0.5L0.5 8.5" stroke="#6e6e6e" stroke-width="1.3"/></svg>
<div class="a" style="left:1591px;top:72px;width:186px;height:33px;background:#45443d"></div>
<svg class="a" style="left:1602px;top:80px" width="20" height="20" viewBox="0 0 20 20"><circle cx="9" cy="9" r="8.5" fill="#3b88ad"/><path d="M11.6 6.4A3.6 3.6 0 1 0 11.6 11.6" fill="none" stroke="#20384a" stroke-width="1.6"/><rect x="12" y="13" width="7" height="6" fill="#c5c5c5"/><path d="M13.5 13V11.5A2 2 0 0 1 17.5 11.5V13" fill="none" stroke="#c5c5c5" stroke-width="1.2"/></svg>
<div class="t" style="left:1626px;top:80px;letter-spacing:-0.147px">RedisTemplate.java</div>
<svg class="a" style="left:1765px;top:85px" width="10" height="9"><path d="M0.5 0.5L9.5 8.5M9.5 0.5L0.5 8.5" stroke="#6e6e6e" stroke-width="1.3"/></svg>
<div class="a" style="left:1777px;top:72px;width:80px;height:33px;background:#45443d"></div>
<svg class="a" style="left:1795px;top:80px" width="20" height="20" viewBox="0 0 20 20"><circle cx="9" cy="9" r="8.5" fill="#5a9b3e"/><path d="M7 5H11M9 5V13M7 13H11" stroke="#2a3a20" stroke-width="1.6"/><rect x="12" y="13" width="7" height="6" fill="#c5c5c5"/><path d="M13.5 13V11.5A2 2 0 0 1 17.5 11.5V13" fill="none" stroke="#c5c5c5" stroke-width="1.2"/></svg>
<div class="t" style="left:1818px;top:80px;width:39px;overflow:hidden">Value</div>
<div class="a" style="left:685px;top:101px;width:245px;height:4px;background:#747a80"></div>
<svg class="a" style="left:1868px;top:84px" width="14" height="9"><path d="M1 1L7 7L13 1" fill="none" stroke="#bbbbbb" stroke-width="1.8"/></svg>
<div id="ed">
 <div class="a" style="left:0;top:0;width:76px;height:884px;background:#313335"></div>
 <div id="code">
<div class="a" style="left:75px;top:372.25px;width:1330px;height:27.5px;background:#323232"></div>
<div class="a" style="left:0px;top:372.25px;width:75px;height:27.5px;background:#343638"></div>
<div class="a" style="left:129px;top:427.25px;width:1px;height:440.00px;background:#393939"></div>
<div class="a" style="left:174px;top:454.75px;width:1px;height:27.50px;background:#393939"></div>
<div class="a" style="left:174px;top:537.25px;width:1px;height:247.50px;background:#393939"></div>
<div class="a" style="left:174px;top:812.25px;width:1px;height:27.50px;background:#393939"></div>
<div class="a" style="left:218px;top:564.75px;width:1px;height:192.50px;background:#393939"></div>
<div class="a" style="left:129px;top:977.25px;width:1px;height:55.00px;background:#393939"></div>
<div class="a" style="left:74px;top:105px;width:1px;height:884px;background:#505254"></div>
<svg class="a" style="left:69px;top:215.50px" width="11" height="11"><rect x="0.5" y="0.5" width="10" height="10" fill="#313335" stroke="#6b6d6f"/><path d="M2.5 5.5H8.5M5.5 2.5V8.5" stroke="#8a8c8e"/></svg>
<svg class="a" style="left:69px;top:270.50px" width="11" height="11"><rect x="0.5" y="0.5" width="10" height="10" fill="#313335" stroke="#6b6d6f"/><path d="M2.5 5.5H8.5M5.5 2.5V8.5" stroke="#8a8c8e"/></svg>
<svg class="a" style="left:69px;top:325.50px" width="11" height="11"><rect x="0.5" y="0.5" width="10" height="10" fill="#313335" stroke="#6b6d6f"/><path d="M2.5 5.5H8.5M5.5 2.5V8.5" stroke="#8a8c8e"/></svg>
<svg class="a" style="left:69px;top:408.50px" width="11" height="15"><path d="M0.5 0.5H10.5V8.5L5.5 13.5L0.5 8.5Z" fill="#313335" stroke="#6b6d6f"/><path d="M2.5 5H8.5" stroke="#8a8c8e"/></svg>
<svg class="a" style="left:69px;top:436.00px" width="11" height="15"><path d="M0.5 0.5H10.5V8.5L5.5 13.5L0.5 8.5Z" fill="#313335" stroke="#6b6d6f"/><path d="M2.5 5H8.5" stroke="#8a8c8e"/></svg>
<svg class="a" style="left:69px;top:487.00px" width="11" height="15"><path d="M0.5 13.5H10.5V5.5L5.5 0.5L0.5 5.5Z" fill="#313335" stroke="#6b6d6f"/><path d="M2.5 9H8.5" stroke="#8a8c8e"/></svg>
<svg class="a" style="left:69px;top:518.50px" width="11" height="15"><path d="M0.5 0.5H10.5V8.5L5.5 13.5L0.5 8.5Z" fill="#313335" stroke="#6b6d6f"/><path d="M2.5 5H8.5" stroke="#8a8c8e"/></svg>
<svg class="a" style="left:69px;top:793.50px" width="11" height="15"><path d="M0.5 0.5H10.5V8.5L5.5 13.5L0.5 8.5Z" fill="#313335" stroke="#6b6d6f"/><path d="M2.5 5H8.5" stroke="#8a8c8e"/></svg>
<svg class="a" style="left:69px;top:844.50px" width="11" height="15"><path d="M0.5 13.5H10.5V5.5L5.5 0.5L0.5 5.5Z" fill="#313335" stroke="#6b6d6f"/><path d="M2.5 9H8.5" stroke="#8a8c8e"/></svg>
<svg class="a" style="left:69px;top:872.00px" width="11" height="15"><path d="M0.5 13.5H10.5V5.5L5.5 0.5L0.5 5.5Z" fill="#313335" stroke="#6b6d6f"/><path d="M2.5 9H8.5" stroke="#8a8c8e"/></svg>
<svg class="a" style="left:69px;top:958.50px" width="11" height="15"><path d="M0.5 0.5H10.5V8.5L5.5 13.5L0.5 8.5Z" fill="#313335" stroke="#6b6d6f"/><path d="M2.5 5H8.5" stroke="#8a8c8e"/></svg>
<svg class="a" style="left:69px;top:986.00px" width="11" height="15"><path d="M0.5 0.5H10.5V8.5L5.5 13.5L0.5 8.5Z" fill="#313335" stroke="#6b6d6f"/><path d="M2.5 5H8.5" stroke="#8a8c8e"/></svg>
<svg class="a" style="left:34px;top:403.50px" width="20" height="20"><circle cx="6.5" cy="10" r="5.8" fill="#5a9b3e"/><path d="M5 7H8M6.5 7V13M5 13H8" stroke="#2a3a20" stroke-width="1.3"/><path d="M14.5 19V3" stroke="#d05a5a" stroke-width="1.4"/><path d="M11.5 6.5L14.5 2.5L17.5 6.5" fill="none" stroke="#d05a5a" stroke-width="1.4"/></svg>
<svg class="a" style="left:34px;top:953.50px" width="20" height="20"><circle cx="6.5" cy="10" r="5.8" fill="#5a9b3e"/><path d="M5 7H8M6.5 7V13M5 13H8" stroke="#2a3a20" stroke-width="1.3"/><path d="M14.5 19V3" stroke="#d05a5a" stroke-width="1.4"/><path d="M11.5 6.5L14.5 2.5L17.5 6.5" fill="none" stroke="#d05a5a" stroke-width="1.4"/></svg>
  <div class="ln" style="top:99.85px">15</div>
<div class="ln" style="top:127.35px">16</div>
<div class="ln" style="top:154.85px">17</div>
<div class="ln" style="top:182.35px">18</div>
<div class="ln" style="top:209.85px">19</div>
<div class="ln" style="top:237.35px">22</div>
<div class="ln" style="top:264.85px">23</div>
<div class="ln" style="top:292.35px">26</div>
<div class="ln" style="top:319.85px">27</div>
<div class="ln" style="top:347.35px">30</div>
<div class="ln cur" style="top:374.85px">31</div>
<div class="ln" style="top:402.35px">32</div>
<div class="ln" style="top:429.85px">33</div>
<div class="ln" style="top:457.35px">34</div>
<div class="ln" style="top:484.85px">35</div>
<div class="ln" style="top:512.35px">36</div>
<div class="ln" style="top:539.85px">37</div>
<div class="ln" style="top:567.35px">38</div>
<div class="ln" style="top:594.85px">39</div>
<div class="ln" style="top:622.35px">40</div>
<div class="ln" style="top:649.85px">41</div>
<div class="ln" style="top:677.35px">42</div>
<div class="ln" style="top:704.85px">43</div>
<div class="ln" style="top:732.35px">44</div>
<div class="ln" style="top:759.85px">45</div>
<div class="ln" style="top:787.35px">46</div>
<div class="ln" style="top:814.85px">47</div>
<div class="ln" style="top:842.35px">48</div>
<div class="ln" style="top:869.85px">49</div>
<div class="ln" style="top:897.35px">50</div>
<div class="ln" style="top:924.85px">51</div>
<div class="ln" style="top:952.35px">52</div>
<div class="ln" style="top:979.85px">53</div>
  <div class="cl" style="top:99.85px"><span class="k">public </span><span class="k">class </span><span class="d">FastJsonRedisSerializer&lt;</span><span class="tp">T</span><span class="d">&gt; </span><span class="k">implements </span><span class="d">RedisSerializer&lt;</span><span class="tp">T</span><span class="d">&gt; {</span></div>
<div class="cl" style="top:127.35px"><span class="d">    </span><span class="k">private </span><span class="d">FastJsonConfig </span><span class="f">fastJsonConfig</span><span class="d"> = </span><span class="k">new </span><span class="d">FastJsonConfig()</span><span class="k">;</span></div>
<div class="cl" style="top:154.85px"><span class="d">    </span><span class="k">private </span><span class="d">Class&lt;</span><span class="tp">T</span><span class="d">&gt; </span><span class="f">type</span><span class="k">;</span></div>
<div class="cl" style="top:182.35px"></div>
<div class="cl" style="top:209.85px"><span class="d">    </span><span class="k">public </span><span class="m">FastJsonRedisSerializer</span><span class="d">(Class&lt;</span><span class="tp">T</span><span class="d">&gt; type)</span><span class="fold"> { </span><span class="k">this</span><span class="d">.</span><span class="f">type</span><span class="d"> = type</span><span class="k">;</span><span class="fold"> }</span></div>
<div class="cl" style="top:237.35px"></div>
<div class="cl" style="top:264.85px"><span class="d">    </span><span class="k">public </span><span class="d">FastJsonConfig </span><span class="m">getFastJsonConfig</span><span class="d">()</span><span class="fold"> { </span><span class="k">return </span><span class="f">fastJsonConfig</span><span class="k">;</span><span class="fold"> }</span></div>
<div class="cl" style="top:292.35px"></div>
<div class="cl" style="top:319.85px"><span class="d">    </span><span class="k">public void </span><span class="m">setFastJsonConfig</span><span class="d">(FastJsonConfig fastJsonConfig)</span><span class="fold"> { </span><span class="k">this</span><span class="d">.</span><span class="f">fastJsonConfig</span><span class="d"> = fastJsonConfig</span><span class="k">;</span><span class="fold"> }</span></div>
<div class="cl" style="top:347.35px"></div>
<div class="cl" style="top:374.85px"><span class="d">    </span><span class="an">@Override</span></div>
<div class="cl" style="top:402.35px"><span class="d">    </span><span class="k">public </span><span class="k">byte</span><span class="d">[] </span><span class="hl">serialize</span><span class="d">(</span><span class="tp">T</span><span class="d"> t) </span><span class="k">throws </span><span class="d">SerializationException {</span></div>
<div class="cl" style="top:429.85px"><span class="d">        </span><span class="k">if </span><span class="d">(t == </span><span class="k">null</span><span class="d">) {</span></div>
<div class="cl" style="top:457.35px"><span class="d">            </span><span class="k">return new byte</span><span class="d">[</span><span class="n">0</span><span class="d">]</span><span class="k">;</span></div>
<div class="cl" style="top:484.85px"><span class="d">        }</span></div>
<div class="cl" style="top:512.35px"><span class="d">        </span><span class="k">try </span><span class="d">{</span></div>
<div class="cl" style="top:539.85px"><span class="d">            </span><span class="k">return </span><span class="d">JSON.</span><span class="i">toJSONBytes</span><span class="d">(</span></div>
<div class="cl" style="top:567.35px"><span class="d">                    </span><span class="f">fastJsonConfig</span><span class="d">.getCharset()</span><span class="k">,</span></div>
<div class="cl" style="top:594.85px"><span class="d">                    t</span><span class="k">,</span></div>
<div class="cl" style="top:622.35px"><span class="d">                    </span><span class="f">fastJsonConfig</span><span class="d">.getSerializeConfig()</span><span class="k">,</span></div>
<div class="cl" style="top:649.85px"><span class="d">                    </span><span class="f">fastJsonConfig</span><span class="d">.getSerializeFilters()</span><span class="k">,</span></div>
<div class="cl" style="top:677.35px"><span class="d">                    </span><span class="f">fastJsonConfig</span><span class="d">.getDateFormat()</span><span class="k">,</span></div>
<div class="cl" style="top:704.85px"><span class="d">                    JSON.</span><span class="fi">DEFAULT_GENERATE_FEATURE</span><span class="k">,</span></div>
<div class="cl" style="top:732.35px"><span class="d">                    </span><span class="f">fastJsonConfig</span><span class="d">.getSerializerFeatures()</span></div>
<div class="cl" style="top:759.85px"><span class="d">            )</span><span class="k">;</span></div>
<div class="cl" style="top:787.35px"><span class="d">        } </span><span class="k">catch </span><span class="d">(Exception ex) {</span></div>
<div class="cl" style="top:814.85px"><span class="d">            </span><span class="k">throw new </span><span class="d">SerializationException(</span><span class="s">&quot;Could not serialize: &quot;</span><span class="d"> + ex.getMessage()</span><span class="k">, </span><span class="d">ex)</span><span class="k">;</span></div>
<div class="cl" style="top:842.35px"><span class="d">        }</span></div>
<div class="cl" style="top:869.85px"><span class="d">    }</span></div>
<div class="cl" style="top:897.35px"></div>
<div class="cl" style="top:924.85px"><span class="d">    </span><span class="an">@Override</span></div>
<div class="cl" style="top:952.35px"><span class="d">    </span><span class="k">public </span><span class="tp">T </span><span class="m">deserialize</span><span class="d">(</span><span class="k">byte</span><span class="d">[] bytes) </span><span class="k">throws </span><span class="d">SerializationException {</span></div>
<div class="cl" style="top:979.85px"><span class="d">        </span><span class="k">if </span><span class="d">(bytes == </span><span class="k">null </span><span class="d">|| bytes.</span><span class="f">length</span><span class="d"> == </span><span class="n">0</span><span class="d">) {</span></div>
 </div>
</div>

<!-- editor right -->
<div class="a" style="left:1881px;top:274px;width:10px;height:410px;background:#4b4d4f"></div>
<svg class="a" style="left:1875px;top:108px" width="16" height="13"><path d="M1.5 6.5L6 11L14.5 2" fill="none" stroke="#499c54" stroke-width="2.4"/></svg>
<div class="a" style="left:1875px;top:409px;width:16px;height:2px;background:#2f6f3a"></div>
<!-- right stripe -->
<div class="a" style="left:1891px;top:72px;width:1px;height:917px;background:#323232"></div>
<div class="a" style="left:1892px;top:72px;width:28px;height:917px;background:#3c3f41"></div>
<div class="a" style="left:1899px;top:87px;font:italic bold 17px 'Liberation Sans';color:#c0c0c0;line-height:14px">m</div>
<div class="vt vtr" style="left:1913px;top:105.7px;letter-spacing:-0.175px">Maven</div>
<svg class="a" style="left:1896px;top:168px" width="22" height="20"><circle cx="10.5" cy="9.6" r="6.6" fill="#bdbdbd"/><path d="M5.5 4.2L13 12.8" stroke="#3c3f41" stroke-width="1.6"/><path d="M9 13.5L12.5 17L19 10.5" fill="none" stroke="#3c3f41" stroke-width="4"/><path d="M9.5 14L12.5 16.8L18 11" fill="none" stroke="#bdbdbd" stroke-width="2"/></svg>
<div class="vt vtr" style="left:1913px;top:191.2px;letter-spacing:-0.057px">Bean Validation</div>
<div class="a" style="left:1900px;top:311px;width:14px;height:14px;background:linear-gradient(#72d0a8 0,#72d0a8 20%,#7dbf6e 22%,#8fca80 100%);border-radius:2px"></div>
<div class="a" style="left:1901px;top:315px;width:12px;height:1px;background:#6aa85c"></div>
<div class="a" style="left:1901px;top:318.5px;width:12px;height:1px;background:#6aa85c"></div>
<div class="a" style="left:1901px;top:322px;width:12px;height:1px;background:#6aa85c"></div>
<div class="vt vtr" style="left:1913px;top:330.8px;letter-spacing:0.169px">NoSql Explorer</div>
<svg class="a" style="left:1899px;top:446px" width="16" height="18"><ellipse cx="7.5" cy="3.2" rx="7" ry="2.8" fill="#bbbbbb"/><path d="M0.5 6.2Q7.5 9.5 14.5 6.2V8.3Q7.5 11.6 0.5 8.3Z M0.5 10Q7.5 13.3 14.5 10V12.1Q7.5 15.4 0.5 12.1Z M0.5 13.8Q7.5 17.1 14.5 13.8V15.2Q7.5 18.5 0.5 15.2Z" fill="#bbbbbb"/></svg>
<div class="vt vtr" style="left:1913px;top:468.6px;letter-spacing:-0.043px">Database</div>
<svg class="a" style="left:1899px;top:546px" width="16" height="18"><circle cx="7.5" cy="4.5" r="2.6" fill="#b8b8b8"/><ellipse cx="7.5" cy="12.5" rx="3.8" ry="4" fill="#b8b8b8"/><path d="M1.5 1.5L5 5M13.5 1.5L10 5M1 8H5M14 8H10M2 16V12L5 10.5M13 16V12L10 10.5" fill="none" stroke="#b8b8b8" stroke-width="1.4"/></svg>
<div class="vt vtr" style="left:1913px;top:568.3px;letter-spacing:1.000px">Ant</div>
<svg class="a" style="left:1898px;top:615px" width="18" height="19"><rect x="2" y="1" width="6" height="6" fill="#b0b0b0"/><path d="M5 7V13" stroke="#b0b0b0" stroke-width="1.4"/><path d="M5 9L9 13L5 17.5L1 13Z" fill="#b0b0b0"/><path d="M8 13H11" stroke="#b0b0b0" stroke-width="1.4"/><rect x="11" y="10" width="6" height="6" fill="#b0b0b0"/></svg>
<div class="vt vtr" style="left:1913px;top:638.3px;letter-spacing:-0.065px">BPMN-Activiti-Diagram</div>
<svg class="a" style="left:1895px;top:898px" width="22" height="24"><path d="M11.3 7.2Q14 8.8 15.2 11" fill="none" stroke="#f5a018" stroke-width="2.6" stroke-linecap="round"/><path d="M9 20.5Q12.5 21.5 15.2 18" fill="none" stroke="#f5a018" stroke-width="2.6" stroke-linecap="round"/><path d="M13.4 3.8L5 12.5Q4 14 5 15.5L9 20" fill="none" stroke="#dcdcdc" stroke-width="2.8" stroke-linecap="round"/><path d="M10 14.5H18.5" stroke="#a8a8a8" stroke-width="2.6" stroke-linecap="round"/></svg>
<div class="vt vtr" style="left:1913px;top:924.5px;letter-spacing:0.143px">leetcode</div>

<!-- bottom bar -->
<div class="a" style="left:0;top:989px;width:1920px;height:1px;background:#323232"></div>
<div class="a" style="left:0;top:990px;width:1920px;height:27px;background:#3c3f41"></div>
<div class="a" style="left:0;top:1016px;width:1920px;height:1px;background:#48473f"></div>
<div class="a" style="left:0;top:1017px;width:1920px;height:6px;background:#3c3f41"></div>
<svg class="a" style="left:40px;top:996px" width="14" height="17"><path d="M2.3 16.5V1M2.3 9.5H7.5Q9.5 9.5 9.5 7.5V4" fill="none" stroke="#a8a8a8" stroke-width="2.6"/><path d="M5.5 5L9.5 0.8L13.5 5Z" fill="#a8a8a8"/></svg>
<div class="t" style="left:60px;top:995.5px;font-size:13px;letter-spacing:-0.200px"><u>9</u>: Git</div>
<svg class="a" style="left:117px;top:997px" width="14" height="14"><path d="M0 1.5H2.5M4.5 1.5H13.5M0 6.5H2.5M4.5 6.5H13.5M0 11.5H2.5M4.5 11.5H13.5" stroke="#a8a8a8" stroke-width="2.2"/></svg>
<div class="t" style="left:136px;top:995.5px;font-size:13px;letter-spacing:-0.500px"><u>6</u>: TODO</div>
<svg class="a" style="left:212px;top:996px" width="16" height="15"><path d="M8 0.5L15.5 14.5H0.5Z" fill="#b0b0b0"/><path d="M8 5V10M8 11.5V13" stroke="#3c3f41" stroke-width="1.6"/></svg>
<div class="t" style="left:233px;top:995.5px;font-size:13px;letter-spacing:-0.057px">Problems</div>
<svg class="a" style="left:313px;top:994px" width="22" height="20" viewBox="0 0 22 20"><path d="M6 2.5L8 5M13 2.5L11 5" stroke="#9a9a9a" stroke-width="1.8"/><ellipse cx="9.5" cy="11.5" rx="5.8" ry="6.6" fill="#9a9a9a"/><path d="M1.5 8.5H17.5M1.5 12.5H17.5M2.5 16H16.5" stroke="#9a9a9a" stroke-width="2"/><circle cx="16" cy="16.5" r="3.2" fill="#3c3f41"/><circle cx="16" cy="16.5" r="2.3" fill="#08d808"/></svg>
<div class="t" style="left:335px;top:995.5px;font-size:13px;letter-spacing:-0.043px"><u>5</u>: Debug</div>
<svg class="a" style="left:411px;top:995px" width="18" height="18"><circle cx="9" cy="9" r="7.5" fill="none" stroke="#d43b3b" stroke-width="2"/><path d="M1.5 9H16.5" stroke="#d43b3b" stroke-width="2"/></svg>
<div class="t" style="left:434px;top:995.5px;font-size:13px;letter-spacing:-0.287px">SonarLint</div>
<svg class="a" style="left:508px;top:992px" width="24" height="22"><path d="M4 12.5L12 5.8" stroke="#a8a8a8" stroke-width="3.6"/><path d="M8.5 8.5L19 18.5" stroke="#a8a8a8" stroke-width="3.2"/></svg>
<div class="t" style="left:534px;top:995.5px;font-size:13px;letter-spacing:-0.325px">Build</div>
<svg class="a" style="left:586px;top:997px" width="15" height="14"><rect x="0" y="0" width="14" height="13" fill="#a8a8a8"/><path d="M3 3L6.5 5.5L3 8M7 10H11" fill="none" stroke="#3c3f41" stroke-width="1.4"/></svg>
<div class="t" style="left:606px;top:995.5px;font-size:13px;letter-spacing:0.100px">Terminal</div>
<svg class="a" style="left:683px;top:997px" width="15" height="14"><path d="M0 1.8H14M0 6.8H8M0 11.8H12" stroke="#a8a8a8" stroke-width="2.4"/></svg>
<div class="t" style="left:703px;top:995.5px;font-size:13px;letter-spacing:-0.060px"><u>0</u>: Messages</div>
<svg class="a" style="left:804px;top:995px" width="17" height="17"><rect x="0.5" y="0.5" width="12" height="12" fill="none" stroke="#b0b0b0" stroke-width="1.5"/><rect x="5" y="6" width="11" height="10" fill="#b0b0b0"/><path d="M7.5 8V14M11.5 8V14" stroke="#3c3f41" stroke-width="1.2"/></svg>
<div class="t" style="left:825px;top:995.5px;font-size:13px;letter-spacing:-0.164px">Java Enterprise</div>
<svg class="a" style="left:939px;top:995px" width="17" height="16"><path d="M1 14C0 6 7 1 16 1C15 9 10 14 3 13Z" fill="#9a9a9a"/><path d="M2 15Q6 8 12 5" fill="none" stroke="#3c3f41" stroke-width="1.2"/></svg>
<div class="t" style="left:960px;top:995.5px;font-size:13px;letter-spacing:-0.060px">Spring</div>
<svg class="a" style="left:1801px;top:996px" width="18" height="18"><circle cx="9" cy="9" r="8.5" fill="#4f9c4a"/><text x="5.2" y="13.5" font-family="Liberation Sans" font-weight="bold" font-size="12" fill="#e8e8e8">5</text></svg>
<div class="t" style="left:1824px;top:995.5px;font-size:13px;letter-spacing:-0.375px">Event Log</div>

<!-- red annotations -->
<div class="a" style="left:5px;top:35px;width:153px;height:36px;border:4.5px solid #ff1f12;border-radius:7px"></div>
<div class="a" style="left:574.5px;top:357.5px;width:733.5px;height:90px;border:4.5px solid #ff1f12;border-radius:6px"></div>
<svg class="a" style="left:0;top:0" width="520" height="280"><polygon points="380.5,99.5 397.5,107.5 392.5,111 496,263 386.5,115 382,118.5" fill="#ff1f12"/></svg>

</body></html>
